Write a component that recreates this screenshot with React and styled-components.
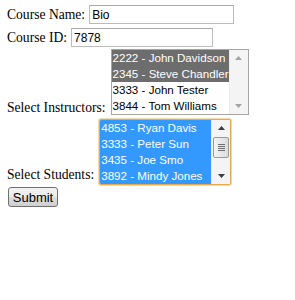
import styled, { createGlobalStyle } from "styled-components";

const GlobalStyle = createGlobalStyle`
  body {
    margin: 0;
    background: #ffffff;
    font-family: "Liberation Serif", "Times New Roman", serif;
  }
`;

const instructors = [
  { id: "2222", name: "John Davidson", selected: true },
  { id: "2345", name: "Steve Chandler", selected: true },
  { id: "3333", name: "John Tester", selected: false },
  { id: "3844", name: "Tom Williams", selected: false },
];

const students = [
  { id: "4853", name: "Ryan Davis", selected: true },
  { id: "3333", name: "Peter Sun", selected: true },
  { id: "3435", name: "Joe Smo", selected: true },
  { id: "3892", name: "Mindy Jones", selected: true },
];

function ScrollArrow({ down, muted }) {
  return (
    <svg width="7" height="4" viewBox="0 0 7 4">
      <polygon
        points={down ? "0,0 7,0 3.5,4" : "0,4 7,4 3.5,0"}
        fill={muted ? "#a3a3a3" : "#3c3c3c"}
      />
    </svg>
  );
}

function ListBox({ items, focused, width, thumb }) {
  return (
    <Box $focused={focused} $width={width}>
      <Options>
        {items.map((item) => (
          <Option
            key={item.id + item.name}
            $selected={item.selected}
            $focused={focused}
          >
            {item.id} - {item.name}
          </Option>
        ))}
      </Options>
      <ScrollBar>
        <ArrowButton>
          <ScrollArrow muted={!thumb} />
        </ArrowButton>
        <Track>
          {thumb && (
            <Thumb>
              <Grip />
              <Grip />
              <Grip />
              <Grip />
            </Thumb>
          )}
        </Track>
        <ArrowButton>
          <ScrollArrow down muted={!thumb} />
        </ArrowButton>
      </ScrollBar>
    </Box>
  );
}

export default function App() {
  return (
    <>
      <GlobalStyle />
      <Form onSubmit={(e) => e.preventDefault()}>
        <InputRow>
          <Label>Course Name:</Label>
          <TextInput $width={145} defaultValue="Bio" />
        </InputRow>
        <InputRow $top={4}>
          <Label>Course ID:</Label>
          <TextInput $width={142} defaultValue="7878" />
        </InputRow>
        <SelectRow $top={2}>
          <SelectLabel>Select Instructors:</SelectLabel>
          <ListBox items={instructors} width={138} />
        </SelectRow>
        <SelectRow $top={4}>
          <SelectLabel $shift={3}>Select Students:</SelectLabel>
          <ListBox items={students} width={132} focused thumb />
        </SelectRow>
        <ButtonRow>
          <SubmitButton type="submit">Submit</SubmitButton>
        </ButtonRow>
      </Form>
    </>
  );
}

const Form = styled.form`
  display: flex;
  flex-direction: column;
  padding: 5px 6px;
`;

const InputRow = styled.div`
  display: flex;
  align-items: center;
  gap: 4px;
  margin-top: ${(p) => p.$top || 0}px;
`;

const SelectRow = styled.div`
  display: flex;
  align-items: flex-end;
  gap: 5px;
  margin-top: ${(p) => p.$top || 0}px;
`;

const Label = styled.label`
  font-size: 13.6px;
  color: #000;
  padding-left: 1px;
  line-height: 16px;
`;

const SelectLabel = styled(Label)`
  line-height: 14px;
  margin-bottom: ${(p) => p.$shift || 0}px;
`;

const TextInput = styled.input`
  box-sizing: border-box;
  width: ${(p) => p.$width}px;
  height: 19px;
  padding: 1px 2px;
  border: 1px solid #bcbcbc;
  border-top-color: #a9a9a9;
  font-family: "Liberation Sans", Arial, sans-serif;
  font-size: 12px;
  color: #000;
  outline: none;
`;

const Box = styled.div`
  box-sizing: border-box;
  display: flex;
  width: ${(p) => p.$width}px;
  height: 66px;
  border: 1px solid ${(p) => (p.$focused ? "#e9a94a" : "#a5a5a5")};
  box-shadow: ${(p) => (p.$focused ? "0 0 0 1px #f6d9a6" : "none")};
  border-radius: ${(p) => (p.$focused ? "2px" : "0")};
  background: #fff;
  overflow: hidden;
`;

const Options = styled.div`
  flex: 1;
  min-width: 0;
  display: flex;
  flex-direction: column;
  font-family: "Liberation Sans", Arial, sans-serif;
  font-size: 11.6px;
`;

const Option = styled.div`
  flex: none;
  height: 16px;
  line-height: 16px;
  padding-left: 1px;
  white-space: nowrap;
  color: ${(p) => (p.$selected ? "#ffffff" : "#000000")};
  background: ${(p) =>
    p.$selected ? (p.$focused ? "#3399ff" : "#6d6d6d") : "transparent"};
`;

const ScrollBar = styled.div`
  flex: none;
  width: 18px;
  display: flex;
  flex-direction: column;
  background: #f4f4f4;
  border-left: 1px solid #ececec;
`;

const ArrowButton = styled.div`
  flex: none;
  height: 16px;
  display: flex;
  align-items: center;
  justify-content: center;
`;

const Track = styled.div`
  flex: 1;
  display: flex;
  flex-direction: column;
  padding: 1px 1px 0;
`;

const Thumb = styled.div`
  box-sizing: border-box;
  height: 21px;
  border: 1px solid #9a9a9a;
  border-radius: 2px;
  background: linear-gradient(to right, #f4f4f4, #dcdcdc);
  display: flex;
  flex-direction: column;
  align-items: center;
  justify-content: center;
  gap: 1px;
`;

const Grip = styled.div`
  width: 7px;
  height: 1px;
  background: #6e6e6e;
`;

const ButtonRow = styled.div`
  display: flex;
  margin-top: 2px;
  padding-left: 2px;
`;

const SubmitButton = styled.button`
  box-sizing: border-box;
  width: 50px;
  height: 20px;
  padding: 0;
  border: 1px solid #707070;
  border-radius: 3px;
  background: linear-gradient(to bottom, #f2f2f2 0%, #ebebeb 50%, #dddddd 51%, #cfcfcf 100%);
  font-family: "Liberation Sans", Arial, sans-serif;
  font-size: 13px;
  color: #000;
`;
